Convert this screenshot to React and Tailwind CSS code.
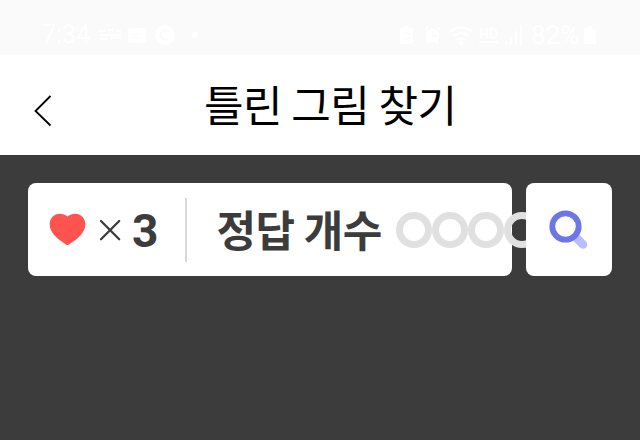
const RINGS = [0, 1, 2, 3]

function StatusBar() {
  return (
    <div className="h-[55px] bg-[#fafafa] text-white font-['Roboto',sans-serif] flex items-start justify-between pt-[23px] pl-[42px] pr-[42px]">
      <div className="flex items-center h-6">
        <span className="w-[50px] text-[25px] leading-6 whitespace-nowrap">7:34</span>
        <svg className="ml-[7px]" width="23" height="14" viewBox="0 0 23 14" fill="none" stroke="currentColor" strokeWidth="2">
          <path d="M0 3h7M9 2h6M17 3h5M1 7h21M1 11h8M11 10h11" />
        </svg>
        <svg className="ml-[6px]" width="18" height="15" viewBox="0 0 18 15">
          <rect width="18" height="15" rx="3" fill="currentColor" />
          <path d="M4 6h10M4 9h10" stroke="#fafafa" strokeWidth="1" />
        </svg>
        <svg className="ml-[9px]" width="20" height="20" viewBox="0 0 20 20">
          <circle cx="10" cy="10" r="10" fill="currentColor" />
          <path d="M13.5 7.2a4.5 4.5 0 1 0 0 5.6" fill="none" stroke="#fafafa" strokeWidth="2" />
        </svg>
        <span className="ml-[17px] size-[6px] rounded-full bg-white" />
      </div>

      <div className="flex items-center h-6 w-[199px]">
        <svg className="ml-[1px] shrink-0" width="13" height="18" viewBox="0 0 13 18">
          <path d="M4 0h5v2h4v16H0V2h4z" fill="currentColor" />
          <path d="M3 8a4 4 0 0 1 7 1M10 11a4 4 0 0 1-7 0" fill="none" stroke="#fafafa" strokeWidth="1.2" />
        </svg>
        <svg className="ml-[11px] shrink-0" width="17" height="18" viewBox="0 0 17 18">
          <circle cx="8.5" cy="9.5" r="7" fill="currentColor" />
          <path d="M1 4l3-3M16 4l-3-3M3 17l2-2M14 17l-2-2" stroke="currentColor" strokeWidth="2" />
          <path d="M8.5 5v5h4" fill="none" stroke="#fafafa" strokeWidth="1.3" />
        </svg>
        <svg className="ml-[8px] shrink-0" width="24" height="19" viewBox="0 0 24 19" fill="none" stroke="currentColor" strokeWidth="2">
          <path d="M1 6c6-6 16-6 22 0M5 10c4-4 10-4 14 0M8 14c2-2 6-2 8 0" />
          <circle cx="12" cy="17" r="1" fill="currentColor" />
        </svg>
        <div className="ml-[6px] w-[19px] shrink-0 flex flex-col">
          <span className="text-[14px] leading-[13px] font-bold">HD</span>
          <span className="h-[2px] bg-white" />
        </div>
        <svg className="ml-[7px] shrink-0" width="18" height="20" viewBox="0 0 18 20" fill="currentColor">
          <path d="M0 16h2v4H0zM5 12h2v8H5zM10 6h2v14h-2zM15 0h2v20h-2z" />
        </svg>
        <span className="ml-[8px] w-[50px] shrink-0 text-[26px] leading-6 whitespace-nowrap">82%</span>
        <svg className="ml-[3px] shrink-0" width="12" height="18" viewBox="0 0 12 19" fill="currentColor">
          <path d="M4 0h4v3h4v16H0V3h4z" />
        </svg>
      </div>
    </div>
  )
}

function Header() {
  return (
    <div className="h-[100px] bg-white flex items-start pl-[33px]">
      <svg className="mt-[39px] shrink-0" width="20" height="34" viewBox="0 0 20 34" fill="none" stroke="#000" strokeWidth="1.8">
        <path d="M17.5 2L2.5 17L17.5 31.5" />
      </svg>
      <h1 className="ml-[151px] mt-[18px] text-[43px] leading-[60px] tracking-[-0.5px] font-normal text-black whitespace-nowrap font-['Noto_Sans_CJK_KR',sans-serif]">
        틀린 그림 찾기
      </h1>
    </div>
  )
}

function ScoreCard() {
  return (
    <div className="w-[484px] h-[93px] shrink-0 rounded-[8px] bg-white flex items-center pl-[21px] text-[#3c3c3c]">
      <svg className="shrink-0" width="37" height="33" viewBox="0 0 37 33">
        <path
          d="M18.5 3.6C16 1.5 13.5.7 11 .7C5 .7.7 5.2.7 11.3C.7 20 8.5 26 17 31.5Q18.5 32.5 20 31.5C28.5 26 36.3 20 36.3 11.3C36.3 5.2 32 .7 26 .7C23.5.7 21 1.5 18.5 3.6Z"
          fill="#ff5350"
        />
      </svg>
      <svg className="ml-[13px] shrink-0" width="22" height="22" viewBox="0 0 22 22" stroke="currentColor" strokeWidth="2.3" strokeLinecap="round">
        <path d="M2 2L20.2 20.2M20.2 2L2 20.2" />
      </svg>
      <span className="ml-[11px] pt-[3px] w-[28px] text-[46px] leading-[60px] font-bold font-['Roboto',sans-serif]">3</span>
      <span className="ml-[27px] w-[1.5px] h-[64px] shrink-0 bg-[#d8d8d8]" />
      <span className="ml-[29.5px] mb-[3px] w-[180px] shrink-0 text-[43px] leading-[60px] tracking-[-0.5px] font-bold whitespace-nowrap font-['Noto_Sans_CJK_KR',sans-serif]">
        정답 개수
      </span>
      <div className="flex shrink-0">
        {RINGS.map(i => (
          <span key={i} className="size-[36px] -mr-[0.3px] shrink-0 rounded-full border-[7px] border-[#e0e0e0]" />
        ))}
      </div>
    </div>
  )
}

function SearchButton() {
  return (
    <button className="relative w-[86px] h-[93px] shrink-0 rounded-[8px] bg-white flex items-center justify-center">
      <svg width="40" height="40" viewBox="0 0 40 40" fill="none">
        <path d="M27.5 28L34 34.5" stroke="#b9bdfb" strokeWidth="8.6" strokeLinecap="round" />
        <circle cx="16.5" cy="16.5" r="13.2" stroke="#6c76e5" strokeWidth="5.8" fill="#fff" />
      </svg>
    </button>
  )
}

export default function App() {
  return (
    <div className="w-[640px] h-[440px] overflow-hidden bg-[#3c3c3c] flex flex-col">
      <StatusBar />
      <Header />
      <div className="flex gap-[14px] pl-[28px] pt-[28px]">
        <ScoreCard />
        <SearchButton />
      </div>
    </div>
  )
}
